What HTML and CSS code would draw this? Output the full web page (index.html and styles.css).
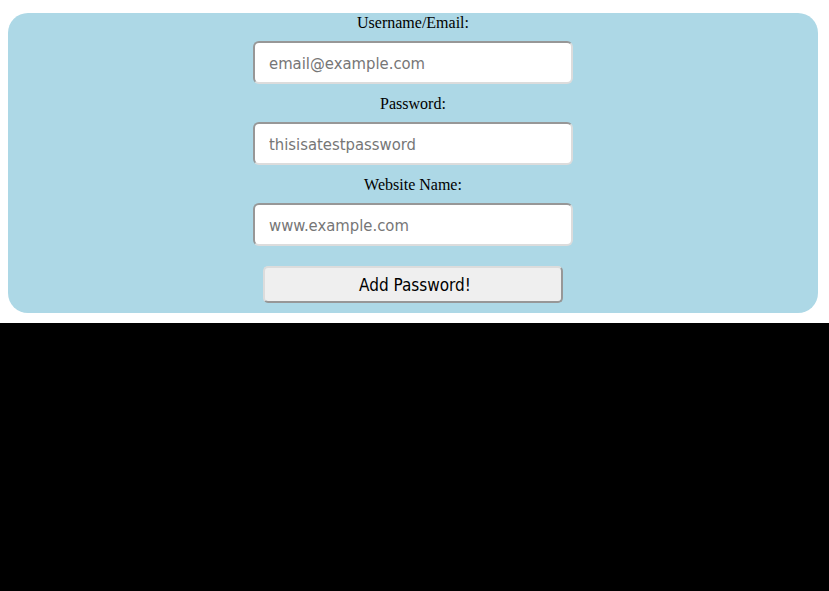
FILE: index.html
```html
<!DOCTYPE html>
<html>
<head>
<meta charset="utf-8">
<link rel="stylesheet" href="styles.css">
</head>
<body>
<div class="page">
  <form class="card">
    <label class="label">Username/Email:</label>
    <input class="field" type="text" placeholder="email@example.com">
    <label class="label">Password:</label>
    <input class="field" type="text" placeholder="thisisatestpassword">
    <label class="label">Website Name:</label>
    <input class="field" type="text" placeholder="www.example.com">
    <button class="btn" type="button">Add Password!</button>
  </form>
</div>
</body>
</html>
```
FILE: styles.css
```css
html, body {
  margin: 0;
  padding: 0;
  background: #000;
}
.page {
  background: #fff;
  padding: 13px 11px 10px 8px;
}
.card {
  margin: 0;
  background: #add8e6;
  border-radius: 20px;
  height: 300px;
  box-sizing: border-box;
  display: flex;
  flex-direction: column;
  align-items: center;
  padding-top: 1px;
}
.label {
  font-family: "Liberation Serif", serif;
  font-size: 16px;
  line-height: 18px;
  color: #000;
}
.field {
  box-sizing: border-box;
  width: 320px;
  height: 43px;
  margin: 9px 0 11px;
  padding: 1px 14px 0;
  border: 2px solid;
  border-color: #979797 #dcdcdc #dcdcdc #979797;
  border-radius: 6px;
  background: #fff;
  font-family: "DejaVu Sans Condensed", "DejaVu Sans", sans-serif;
  font-stretch: condensed;
  font-size: 16.5px;
  outline: none;
}
.field::placeholder {
  color: #767676;
}
.btn {
  box-sizing: border-box;
  width: 300px;
  height: 37px;
  margin-top: 9px;
  padding-left: 10px;
  border: 2px solid;
  border-color: #dcdcdc #979797 #979797 #dcdcdc;
  border-radius: 5px;
  background: #efefef;
  font-family: "DejaVu Sans Condensed", "DejaVu Sans", sans-serif;
  font-stretch: condensed;
  font-size: 17px;
  color: #000;
}
```
